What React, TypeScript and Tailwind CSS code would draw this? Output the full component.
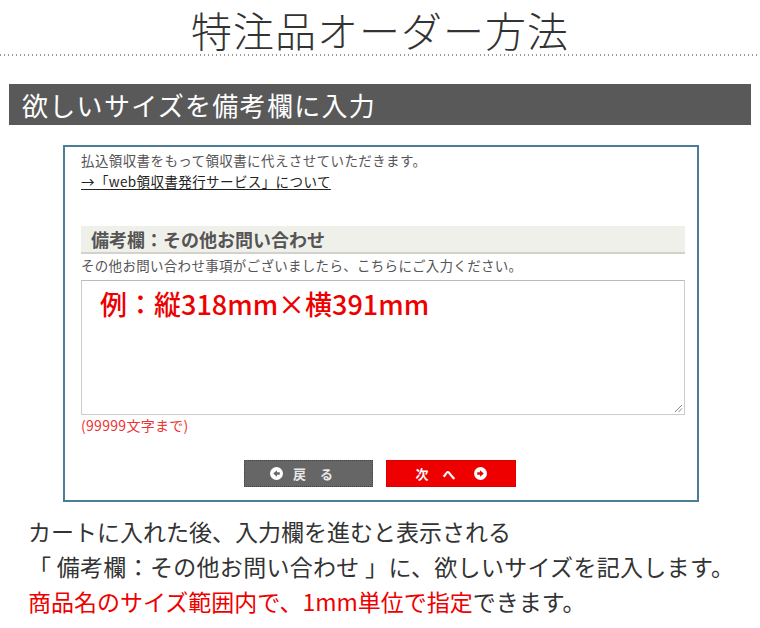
import React from 'react';

const jp = { fontFamily: '"Noto Sans CJK JP", "Noto Sans", sans-serif' };

const CircleArrow = ({ dir, color }: { dir: 'left' | 'right'; color: string }) => (
  <svg width="13" height="13" viewBox="0 0 14 14">
    <circle cx="7" cy="7" r="7" fill="#fff" />
    {dir === 'left' ? (
      <path d="M3.5 7 L7.5 3.5 L7.5 5.6 L10.5 5.6 L10.5 8.4 L7.5 8.4 L7.5 10.5 Z" fill={color} />
    ) : (
      <path d="M10.5 7 L6.5 3.5 L6.5 5.6 L3.5 5.6 L3.5 8.4 L6.5 8.4 L6.5 10.5 Z" fill={color} />
    )}
  </svg>
);

const App: React.FC = () => {
  return (
    <div className="w-[760px] h-[628px] bg-white overflow-hidden text-[#333]" style={jp}>
      {/* TITLE */}
      <div className="pt-[5px] pb-[1px] flex justify-center">
        <h1 className="text-[41px] leading-[48px] font-light text-[#333] tracking-[1px]">特注品オーダー方法</h1>
      </div>
      <div className="h-[2px] bg-[linear-gradient(to_right,#999_1.5px,transparent_1.5px)] bg-[length:4px_2px]" />

      {/* SECTION BANNER */}
      <div className="mt-[28px] mx-[9px] h-[41px] bg-[#595959] flex items-center px-[13px]">
        <span className="text-white text-[26px] leading-none tracking-[1.3px]">欲しいサイズを備考欄に入力</span>
      </div>

      {/* SCREEN CAPTURE BOX */}
      <div className="mt-[20px] ml-[63px] w-[636px] border-[2px] border-[#4a7d96] pl-[16px] pr-[12px] pt-[3px] pb-[13px]">
        <p className="text-[13.5px] leading-[21px] text-[#555] tracking-[0.4px]">払込領収書をもって領収書に代えさせていただきます。</p>
        <p className="text-[13.5px] leading-[21px] text-[#222] tracking-[0.4px] underline underline-offset-2">→「web領収書発行サービス」について</p>

        <div className="mt-[34px] h-[28px] bg-[#f0f0ea] border-b-[2px] border-[#d2d2ca] flex items-center px-[10px]">
          <span className="text-[18px] font-bold text-[#555] leading-none">備考欄：その他お問い合わせ</span>
        </div>
        <p className="mt-[1px] text-[13.5px] leading-[21px] text-[#555] tracking-[0.3px]">その他お問い合わせ事項がございましたら、こちらにご入力ください。</p>

        <div className="relative mt-[4px] h-[135px] border border-[#ccc] border-t-[#bbb] pl-[18px] pt-[5px]">
          <span className="text-[27px] leading-[36px] font-medium text-[#ee0000]">例：縦318mm×横391mm</span>
          <svg className="absolute right-[1px] bottom-[1px]" width="9" height="9" viewBox="0 0 9 9">
            <path d="M8 1 L1 8 M8 4.5 L4.5 8" stroke="#888" strokeWidth="1" />
          </svg>
        </div>
        <p className="text-[14px] leading-[20px] text-[#ee3333] tracking-[0.3px]">(99999文字まで)</p>

        <div className="mt-[25px] flex justify-center gap-[13px] pr-[6px]">
          <div className="w-[129px] h-[27px] bg-[#666] border border-dotted border-[#444] flex items-center justify-center gap-[10px]">
            <CircleArrow dir="left" color="#666" />
            <span className="text-[13px] font-bold text-[#e8e8e8] tracking-[14px] leading-none">戻る</span>
          </div>
          <div className="w-[130px] h-[27px] bg-[#ee0000] border border-[#d00] flex items-center justify-center gap-[4px]">
            <span className="text-[13px] font-bold text-white tracking-[14px] leading-none">次へ</span>
            <CircleArrow dir="right" color="#ee0000" />
          </div>
        </div>
      </div>

      {/* EXPLANATION */}
      <div className="mt-[12px] pl-[28px] text-[23px] leading-[35px] text-[#333]">
        <p>カートに入れた後、入力欄を進むと表示される</p>
        <p className="tracking-[0.3px]">「 備考欄：その他お問い合わせ 」に、欲しいサイズを記入します。</p>
        <p>
          <span className="text-[#ee0000]">商品名のサイズ範囲内で、1mm単位で指定</span>できます。
        </p>
      </div>
    </div>
  );
};

export default App;
